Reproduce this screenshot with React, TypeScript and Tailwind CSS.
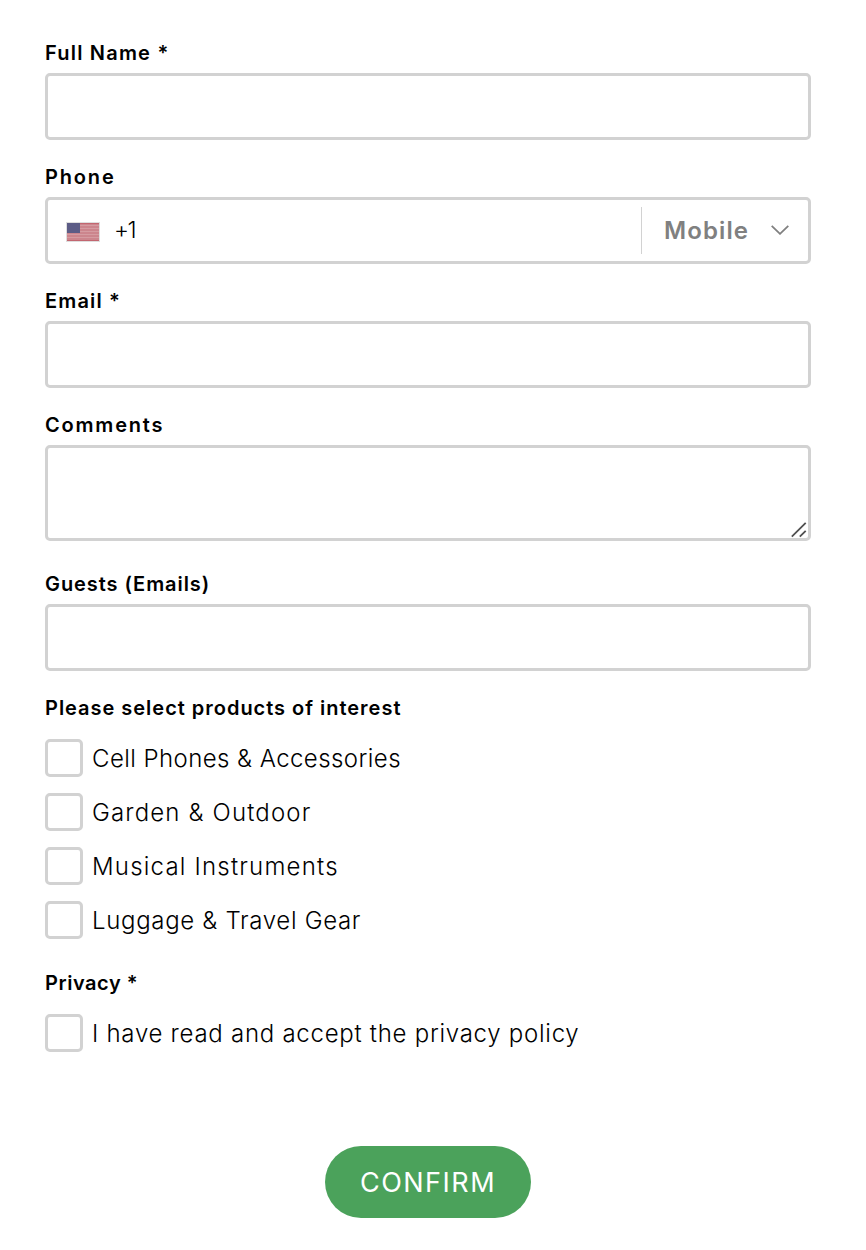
import { useState } from 'react'
import type { ReactNode } from 'react'

const products = [
  { name: 'Cell Phones & Accessories', tracking: 'tracking-[0.43px]' },
  { name: 'Garden & Outdoor', tracking: 'tracking-[1.15px]' },
  { name: 'Musical Instruments', tracking: 'tracking-[1.2px]' },
  { name: 'Luggage & Travel Gear', tracking: 'tracking-[0.68px]' },
]

const inputClass =
  'block h-[67px] w-full rounded-[5px] border-[3px] border-[#d2d2d2] bg-white px-5 text-2xl focus:outline-none'

function App() {
  const [selected, setSelected] = useState<string[]>([])
  const [accepted, setAccepted] = useState(false)

  const toggleProduct = (name: string) => {
    setSelected((prev) =>
      prev.includes(name) ? prev.filter((p) => p !== name) : [...prev, name]
    )
  }

  return (
    <form
      onSubmit={(e) => e.preventDefault()}
      className="flex min-h-[1250px] w-[866px] flex-col bg-white pt-[41px] pr-[55px] pl-[45px] font-['Inter',sans-serif] text-black"
    >
      <Field label="Full Name *" tracking="tracking-[1.2px]">
        <input type="text" aria-label="Full Name" className={inputClass} />
      </Field>

      <Field label="Phone" tracking="tracking-[1.85px]">
        <div className="flex h-[67px] items-center rounded-[5px] border-[3px] border-[#d2d2d2] pr-[19px] pl-[18px]">
          <Flag />
          <span className="ml-[14px] flex-1 text-[23px] leading-none font-light tracking-[-1.6px]">
            +1
          </span>
          <div className="h-[47px] w-px bg-[#d2d2d2]"></div>
          <button
            type="button"
            className="ml-[22px] flex cursor-pointer items-center text-[#808080]"
          >
            <span className="w-[107px] text-left text-[24px] leading-none font-semibold tracking-[1.1px]">
              Mobile
            </span>
            <svg
              width="18"
              height="10"
              viewBox="0 0 18 10"
              fill="none"
              stroke="currentColor"
              strokeWidth="1.8"
              className="mb-px"
            >
              <path d="M0.7 0.8 L9 8.8 L17.3 0.8" />
            </svg>
          </button>
        </div>
      </Field>

      <Field label="Email *" tracking="tracking-[1.15px]">
        <input type="email" aria-label="Email" className={inputClass} />
      </Field>

      <Field label="Comments" tracking="tracking-[1.8px]">
        <div className="relative mb-[6px]">
          <textarea
            aria-label="Comments"
            className="block h-24 w-full resize-none rounded-[5px] border-[3px] border-[#d2d2d2] px-5 py-3 text-2xl focus:outline-none"
          ></textarea>
          <svg
            className="pointer-events-none absolute right-1 bottom-[3px]"
            width="16"
            height="16"
            viewBox="0 0 16 16"
            stroke="#505050"
            strokeWidth="1.8"
          >
            <path d="M0.8 14.7 L14.7 0.8 M8.8 14.7 L14.7 8.8" />
          </svg>
        </div>
      </Field>

      <Field label="Guests (Emails)" tracking="tracking-[0.93px]">
        <input type="text" aria-label="Guests" className={inputClass} />
      </Field>

      <Label text="Please select products of interest" tracking="tracking-[0.98px]" />
      <div className="mt-[19px] mb-8 flex flex-col gap-4">
        {products.map((product) => (
          <Check
            key={product.name}
            label={product.name}
            tracking={product.tracking}
            checked={selected.includes(product.name)}
            onChange={() => toggleProduct(product.name)}
          />
        ))}
      </div>

      <Label text="Privacy *" tracking="tracking-[0.55px]" />
      <div className="mt-[19px]">
        <Check
          label="I have read and accept the privacy policy"
          tracking="tracking-[0.73px]"
          checked={accepted}
          onChange={() => setAccepted(!accepted)}
        />
      </div>

      <button
        type="submit"
        className="mt-[94px] h-[72px] w-[206px] cursor-pointer self-center rounded-full bg-[#4ba25b] pt-[2px] text-[27px] tracking-[1.5px] text-white"
      >
        CONFIRM
      </button>
    </form>
  )
}

function Label({ text, tracking }: { text: string; tracking: string }) {
  return (
    <div className={`text-[20px] leading-6 font-semibold whitespace-nowrap ${tracking}`}>
      {text}
    </div>
  )
}

function Field({
  label,
  tracking,
  children,
}: {
  label: string
  tracking: string
  children: ReactNode
}) {
  return (
    <div className="mb-[25px] flex flex-col gap-2">
      <Label text={label} tracking={tracking} />
      {children}
    </div>
  )
}

function Check({
  label,
  tracking,
  checked,
  onChange,
}: {
  label: string
  tracking: string
  checked: boolean
  onChange: () => void
}) {
  return (
    <label className="flex h-[38px] cursor-pointer items-center gap-[9px]">
      <input
        type="checkbox"
        checked={checked}
        onChange={onChange}
        className="size-[38px] shrink-0 appearance-none rounded-[5px] border-[3px] border-[#d2d2d2] bg-white checked:bg-[#4ba25b]"
      />
      <span className={`pt-[2px] text-[24px] leading-9 font-light whitespace-nowrap ${tracking}`}>
        {label}
      </span>
    </label>
  )
}

function Flag() {
  return (
    <svg width="34" height="20" viewBox="0 0 34 20" className="mt-[2px]">
      <rect width="34" height="20" fill="#dedede" />
      <rect x="1" y="1" width="32" height="18" fill="#cc858d" />
      {[3, 6, 9, 12, 15].map((y) => (
        <rect key={y} x="1" y={y} width="32" height="1" fill="#d59ba1" />
      ))}
      <rect x="1" y="1" width="32" height="1" fill="#c26670" />
      <rect x="1" y="18" width="32" height="1" fill="#c26670" />
      <rect x="1" y="1" width="13" height="10" fill="#5c5c86" />
    </svg>
  )
}

export default App
